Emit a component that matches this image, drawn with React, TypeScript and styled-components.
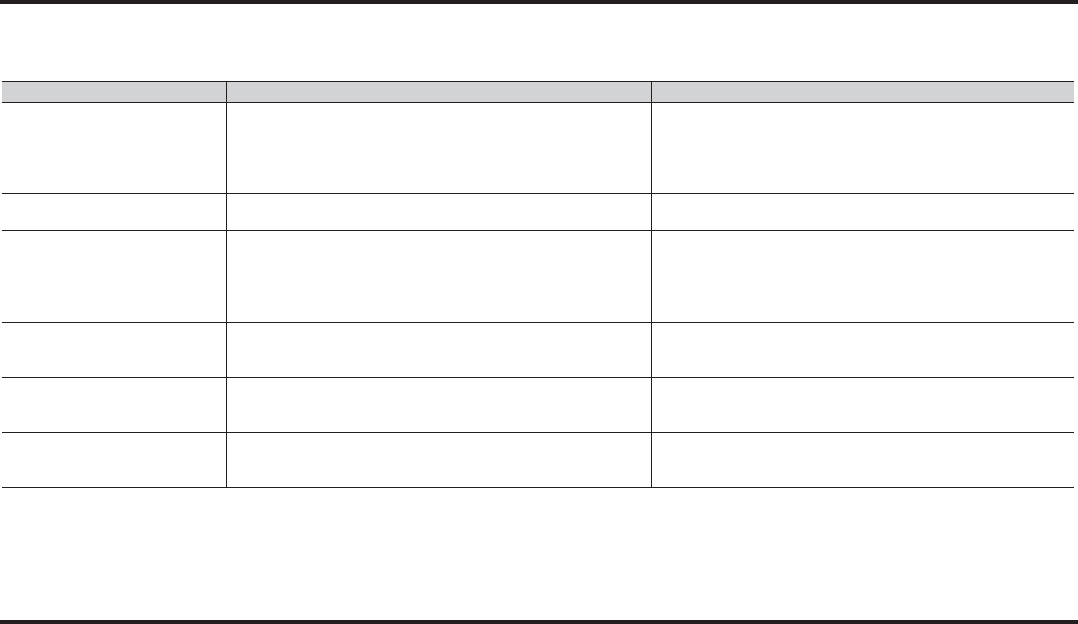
import React from 'react';
import styled, { createGlobalStyle } from 'styled-components';

const GlobalStyle = createGlobalStyle`
  html, body {
    margin: 0;
    padding: 0;
    background: #ffffff;
    font-family: "Liberation Sans", Arial, sans-serif;
  }
`;

const Page = styled.div`
  height: 624px;
  display: flex;
  flex-direction: column;
  background: #ffffff;
`;

const Rule = styled.div`
  height: 4px;
  background-color: #231f20;
  flex-shrink: 0;
`;

const Table = styled.div`
  width: 1072px;
  margin: 77px 0 0 2px;
  display: flex;
  flex-direction: column;
`;

const Row = styled.div<{ $height: number; $head?: boolean }>`
  display: grid;
  grid-template-columns: 224px 425px 423px;
  box-sizing: border-box;
  height: ${(p) => p.$height}px;
  border-bottom: 1px solid #231f20;
  border-top: ${(p) => (p.$head ? '1px solid #231f20' : 'none')};
  background-color: ${(p) => (p.$head ? '#d1d3d4' : 'transparent')};
`;

const Cell = styled.div`
  box-sizing: border-box;
  font-size: 12px;
  color: #231f20;
  padding: 4px 6px;

  & + & {
    border-left: 1px solid #231f20;
  }
`;

const Spacer = styled.div`
  flex: 1;
`;

// row heights measured from the reference, header first
const rowHeights = [91, 37, 92, 55, 55, 55];

const App: React.FC = () => {
  return (
    <>
      <GlobalStyle />
      <Page>
        <Rule />
        <Table>
          <Row $height={22} $head>
            <Cell />
            <Cell />
            <Cell />
          </Row>
          {rowHeights.map((h, i) => (
            <Row key={i} $height={h}>
              <Cell />
              <Cell />
              <Cell />
            </Row>
          ))}
        </Table>
        <Spacer />
        <Rule />
      </Page>
    </>
  );
};

export default App;
